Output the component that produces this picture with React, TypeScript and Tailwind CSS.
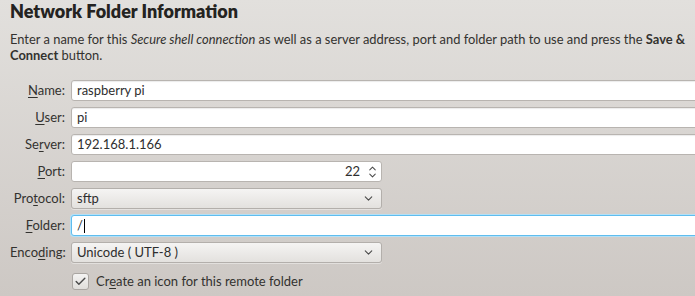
import { Check, ChevronDown, ChevronUp } from 'lucide-react';

const font = { fontFamily: 'Lato, "Open Sans", sans-serif' };

function Label({ before, mnemonic, after }: { before: string; mnemonic: string; after: string }) {
  return (
    <label className="text-right text-[13px] leading-[21px] text-[#33322f] whitespace-nowrap">
      {before}
      <span className="underline underline-offset-2">{mnemonic}</span>
      {after}:
    </label>
  );
}

function TextField({ value, focused = false }: { value: string; focused?: boolean }) {
  return (
    <div
      className={`h-[21px] rounded-[3px] bg-white px-[5px] text-[13px] leading-[19px] text-[#2e2e2e] border ${
        focused ? 'border-[#5fbdee] shadow-[0_0_0_1px_#b3e0f7]' : 'border-[#b8b4b0] shadow-[inset_0_1px_1px_rgba(0,0,0,0.08)]'
      }`}
    >
      {value}
      {focused && <span className="inline-block w-px h-[14px] bg-black align-[-3px] ml-px" />}
    </div>
  );
}

function Combo({ value }: { value: string }) {
  return (
    <div className="w-[311px] h-[21px] flex items-center justify-between rounded-[3px] border border-[#b3afab] bg-gradient-to-b from-[#f5f4f3] to-[#e3e1de] pl-[5px] pr-[6px] text-[13px] text-[#2e2e2e] shadow-[0_1px_0_rgba(255,255,255,0.4)]">
      <span>{value}</span>
      <ChevronDown size={13} strokeWidth={2} className="text-[#4a4a4a]" />
    </div>
  );
}

function SpinBox({ value }: { value: string }) {
  return (
    <div className="w-[311px] h-[21px] flex items-center rounded-[3px] border border-[#b8b4b0] bg-white pr-[3px] text-[13px] text-[#2e2e2e]">
      <span className="flex-1 text-right pr-[7px]">{value}</span>
      <div className="flex flex-col items-center -space-y-[4px] text-[#4a4a4a]">
        <ChevronUp size={11} strokeWidth={2.2} />
        <ChevronDown size={11} strokeWidth={2.2} />
      </div>
    </div>
  );
}

export default function App() {
  return (
    <div
      className="w-[695px] h-[296px] overflow-hidden bg-gradient-to-b from-[#e2e0dd] to-[#cdc8c4] text-[#33322f]"
      style={font}
    >
      <div className="w-[730px] pl-[10px]">
        <h1 className="text-[18px] font-extrabold leading-[22px] text-[#242321]">Network Folder Information</h1>
        <p className="mt-[9px] text-[12.9px] leading-[16px] whitespace-nowrap">
          Enter a name for this <i>Secure shell connection</i> as well as a server address, port and folder path to use
          and press the <b>Save &amp;</b>
          <br />
          <b>Connect</b> button.
        </p>

        <div className="mt-[17px] grid grid-cols-[55px_1fr] gap-x-[6px] gap-y-[6px] items-center">
          <Label before="" mnemonic="N" after="ame" />
          <TextField value="raspberry pi" />

          <Label before="" mnemonic="U" after="ser" />
          <TextField value="pi" />

          <Label before="Se" mnemonic="r" after="ver" />
          <TextField value="192.168.1.166" />

          <Label before="" mnemonic="P" after="ort" />
          <SpinBox value="22" />

          <Label before="Pro" mnemonic="t" after="ocol" />
          <Combo value="sftp" />

          <Label before="" mnemonic="F" after="older" />
          <TextField value="/" focused />

          <Label before="Enco" mnemonic="d" after="ing" />
          <Combo value="Unicode ( UTF-8 )" />

          <div />
          <div className="flex items-center gap-[7px] h-[21px] mt-[2px]">
            <div className="ml-px w-[17px] h-[17px] rounded-[3px] border border-[#aaa6a2] bg-gradient-to-b from-[#f4f3f2] to-[#e0dedb] flex items-center justify-center">
              <Check size={13} strokeWidth={2.6} className="text-[#4a4a4a]" />
            </div>
            <span className="text-[13px]">
              Cr<span className="underline underline-offset-2">e</span>ate an icon for this remote folder
            </span>
          </div>
        </div>
      </div>
    </div>
  );
}
